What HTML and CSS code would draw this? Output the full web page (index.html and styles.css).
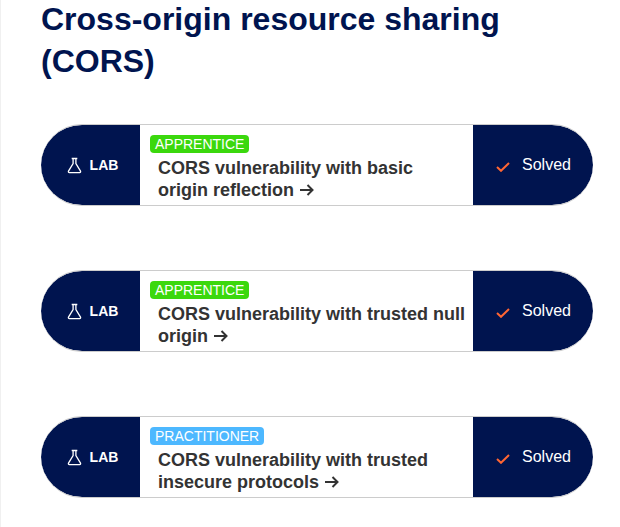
FILE: index.html
```html
<!DOCTYPE html>
<html lang="en">
<head>
    <meta charset="UTF-8">
    <title>Cross-origin resource sharing (CORS)</title>
    <link rel="stylesheet" href="styles.css">
</head>
<body>

<div class="content">
    <h1>Cross-origin resource sharing (CORS)</h1>

    <!-- Lab 1 -->
    <div class="lab">
        <div class="lab-left">
            <svg class="flask" viewBox="0 0 16 18"><path d="M5 1.5h6M6.5 1.5v5.5L1.6 15a1 1 0 0 0 .9 1.5h11a1 1 0 0 0 .9-1.5L9.5 7V1.5"/></svg>
            <span>LAB</span>
        </div>
        <div class="lab-body">
            <span class="level apprentice">APPRENTICE</span>
            <a class="lab-title">CORS vulnerability with basic origin reflection <svg class="arrow" viewBox="0 0 14 12"><path d="M0 6h12.5M7.5 1 12.5 6l-5 5"/></svg></a>
        </div>
        <div class="lab-right">
            <svg class="check" viewBox="0 0 14 10"><path d="M1 5l4 3.8L13 1"/></svg>
            <span>Solved</span>
        </div>
    </div>

    <!-- Lab 2 -->
    <div class="lab">
        <div class="lab-left">
            <svg class="flask" viewBox="0 0 16 18"><path d="M5 1.5h6M6.5 1.5v5.5L1.6 15a1 1 0 0 0 .9 1.5h11a1 1 0 0 0 .9-1.5L9.5 7V1.5"/></svg>
            <span>LAB</span>
        </div>
        <div class="lab-body">
            <span class="level apprentice">APPRENTICE</span>
            <a class="lab-title">CORS vulnerability with trusted null origin <svg class="arrow" viewBox="0 0 14 12"><path d="M0 6h12.5M7.5 1 12.5 6l-5 5"/></svg></a>
        </div>
        <div class="lab-right">
            <svg class="check" viewBox="0 0 14 10"><path d="M1 5l4 3.8L13 1"/></svg>
            <span>Solved</span>
        </div>
    </div>

    <!-- Lab 3 -->
    <div class="lab">
        <div class="lab-left">
            <svg class="flask" viewBox="0 0 16 18"><path d="M5 1.5h6M6.5 1.5v5.5L1.6 15a1 1 0 0 0 .9 1.5h11a1 1 0 0 0 .9-1.5L9.5 7V1.5"/></svg>
            <span>LAB</span>
        </div>
        <div class="lab-body">
            <span class="level practitioner">PRACTITIONER</span>
            <a class="lab-title">CORS vulnerability with trusted insecure protocols <svg class="arrow" viewBox="0 0 14 12"><path d="M0 6h12.5M7.5 1 12.5 6l-5 5"/></svg></a>
        </div>
        <div class="lab-right">
            <svg class="check" viewBox="0 0 14 10"><path d="M1 5l4 3.8L13 1"/></svg>
            <span>Solved</span>
        </div>
    </div>
</div>

</body>
</html>
```
FILE: styles.css
```css
html, body {
    margin: 0;
    height: 100%;
    overflow: hidden;
}

body {
    box-sizing: border-box;
    border-left: 1px solid #f0f0f0;
    background-color: #fff;
    font-family: "Liberation Sans", Arial, sans-serif;
}

.content {
    display: flow-root;
    padding: 0 27px 0 40px;
}

h1 {
    margin: -2px 0 42px 0;
    padding-right: 40px;
    font-size: 32px;
    line-height: 42px;
    font-weight: bold;
    color: #00144f;
}

.lab {
    display: flex;
    height: 82px;
    margin-bottom: 64px;
    box-sizing: border-box;
}

.lab:last-child {
    margin-bottom: 0;
}

.lab-left,
.lab-right {
    display: flex;
    align-items: center;
    border-top: 1px solid #ccc;
    border-bottom: 1px solid #ccc;
    background-color: #00144f;
    background-clip: padding-box;
    color: #fff;
}

.lab-left {
    width: 99px;
    flex: none;
    justify-content: center;
    gap: 8px;
    padding-left: 4px;
    box-sizing: border-box;
    border-radius: 41px 0 0 41px;
    font-size: 14px;
    font-weight: bold;
}

.lab-right {
    width: 120px;
    flex: none;
    gap: 12px;
    padding-left: 23px;
    box-sizing: border-box;
    border-radius: 0 41px 41px 0;
    font-size: 16px;
}

.lab-body {
    flex: 1;
    border-top: 1px solid #ccc;
    border-bottom: 1px solid #ccc;
    padding: 10px 5px 0 10px;
    box-sizing: border-box;
    background-color: #fff;
}

.level {
    display: block;
    width: fit-content;
    padding: 0 5px;
    border-radius: 4px;
    font-size: 14px;
    line-height: 18px;
    color: #fff;
}

.apprentice {
    background-color: #3bd80d;
}

.practitioner {
    background-color: #4db8ff;
}

.lab-title {
    display: block;
    margin: 4px 0 0 8px;
    font-size: 18px;
    line-height: 22px;
    font-weight: bold;
    color: #333;
}

.flask {
    width: 15px;
    height: 17px;
    fill: none;
    stroke: #fff;
    stroke-width: 1.4;
}

.check {
    width: 14px;
    height: 10px;
    margin-top: 4px;
    fill: none;
    stroke: #ff6633;
    stroke-width: 2;
}

.arrow {
    width: 14px;
    height: 12px;
    margin-left: 1px;
    fill: none;
    stroke: #333;
    stroke-width: 2;
}
```
